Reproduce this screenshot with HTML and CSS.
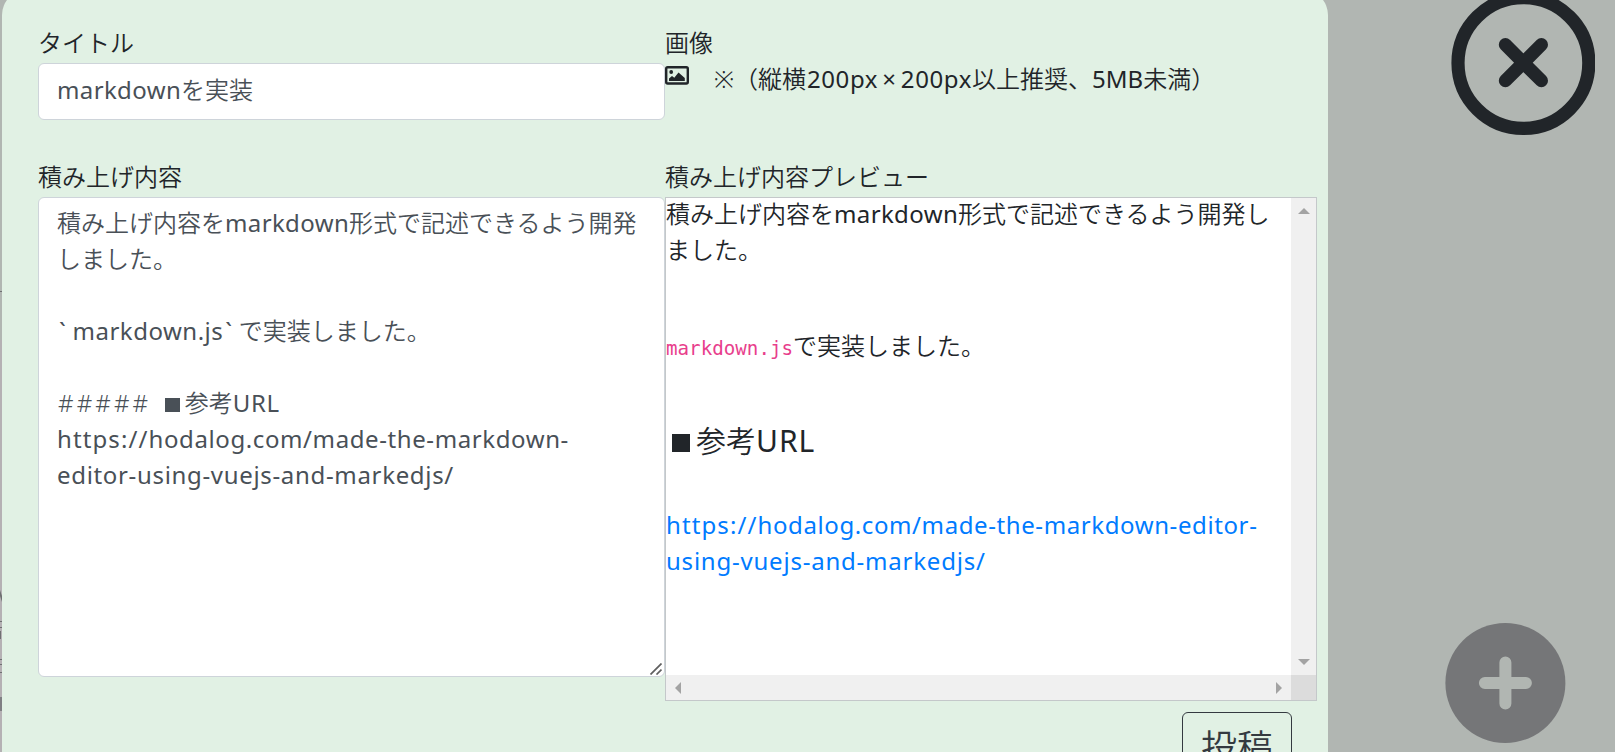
FILE: index.html
```html
<!DOCTYPE html>
<html lang="ja">
<head>
<meta charset="utf-8">
<title>投稿</title>
<link rel="stylesheet" href="styles.css">
</head>
<body>
<div class="page">
  <div class="backdrop-edge">
    <svg width="2" height="752"><path fill="#b5b1b4" d="M0 340h2v412H0z"/><path fill="#6f7072" d="M0 291h2v1H0zM0 590l2 6v6l-2-6zM0 621h2v1H0zM0 627h2v1H0zM0 631h1v8H0zM0 659h2v1H0zM0 664h2v1H0zM0 672h2v1H0z"/><path fill="#7f7f83" d="M0 697h2v14H0z"/></svg>
  </div>
  <main class="modal">
    <div class="grid">
      <section class="field title-field">
        <label class="label">タイトル</label>
        <div class="input"><span class="latin t1">markdown</span>を実装</div>
      </section>
      <section class="field">
        <label class="label">画像</label>
        <div class="upload">
          <svg class="image-icon" width="24" height="19" viewBox="0 0 24 19"><rect x="1.2" y="1.2" width="21.600" height="16.300" rx="1.5" fill="none" stroke="#212529" stroke-width="2.4"/><circle cx="6.200" cy="6" r="1.900" fill="#212529"/><path fill="#212529" d="M4 15v-2.500l3-2.500 2.300 1.800 4.200-5.300 6.300 5.500V15z"/></svg>
          <p class="note">※（縦横<span class="latin t2">200px</span><span class="latin times">×</span><span class="latin t2">200px</span>以上推奨、<span class="latin">5MB</span>未満）</p>
        </div>
      </section>
      <section class="field">
        <label class="label">積み上げ内容</label>
        <div class="textarea">
          <p>積み上げ内容を<span class="latin t1">markdown</span>形式で記述できるよう開発</p>
          <p>しました。</p>
          <p>&nbsp;</p>
          <p><span class="latin tick">`</span><span class="latin t4">markdown.js</span><span class="latin tick">`</span>で実装しました。</p>
          <p>&nbsp;</p>
          <p><span class="hash">##### </span><span class="square"></span>参考<span class="latin t5">URL</span></p>
          <p><span class="latin scheme">https://</span><span class="latin t6">hodalog.com/made-the-markdown-</span></p>
          <p><span class="latin t7">editor-using-vuejs-and-markedjs/</span></p>
          <svg class="grip" width="12" height="12" viewBox="0 0 12 12"><path d="M.5 11.500 11.500.5M6.500 11.500l5-5" stroke="#5f5f5f" stroke-width="1.700"/></svg>
        </div>
      </section>
      <section class="field">
        <label class="label">積み上げ内容プレビュー</label>
        <div class="preview">
          <article class="doc">
            <p>積み上げ内容を<span class="latin t1">markdown</span>形式で記述できるよう開発し<br>ました。</p>
            <p class="code-line"><code>markdown.js</code>で実装しました。</p>
            <h5><span class="square"></span>参考<span class="latin t8">URL</span></h5>
            <p><a><span class="latin scheme">https://</span><span class="latin t6">hodalog.com/made-the-markdown-editor-</span><br><span class="latin t9">using-vuejs-and-markedjs/</span></a></p>
          </article>
          <div class="vbar"><i class="up"></i><i class="down"></i></div>
          <div class="hbar"><i class="left"></i><i class="right"></i></div>
          <div class="corner"></div>
        </div>
      </section>
    </div>
    <button class="submit">投稿</button>
  </main>
  <svg class="close" width="144" height="144" viewBox="0 0 144 144"><g fill="none" stroke="#212529" stroke-width="13.200" stroke-linecap="round"><circle cx="72.400" cy="72" r="65.400"/><path d="M54.400 53.700l36 36M90.400 53.700l-36 36"/></g></svg>
  <svg class="add" width="121" height="120" viewBox="0 0 121 120"><circle cx="60.400" cy="60" r="60" fill="#757678"/><path d="M39.900 60h41M60.400 39.500v41" stroke="#b1b6b2" stroke-width="12" stroke-linecap="round"/></svg>
</div>
</body>
</html>
```
FILE: styles.css
```css
* { box-sizing: border-box; }
body { margin: 0; background: #fff; }
p, h5 { margin: 0; font-weight: 350; }
.page {
  position: relative;
  display: flex;
  width: 1615px;
  height: 752px;
  overflow: hidden;
  background: #b1b6b2;
  color: #212529;
  font: 350 24px/36px "Noto Sans", "Noto Sans CJK JP", sans-serif;
  white-space: nowrap;
}
.backdrop-edge { width: 2px; height: 752px; }
.backdrop-edge svg { display: block; }
.modal {
  width: 1326px;
  height: 800px;
  margin-top: -10px;
  padding: 35px 11px 0 36px;
  border-radius: 25px;
  background: #e1f1e4;
}
.grid {
  display: grid;
  grid-template-columns: 627px 652px;
  grid-template-rows: 134px auto;
}
.label { display: block; height: 38px; line-height: 35px; }
.input {
  height: 57px;
  padding: 8px 18px;
  border: 1px solid #ced4da;
  border-radius: 6px;
  background: #fff;
  color: #495057;
}
.upload { display: flex; gap: 25px; }
.image-icon { margin-top: 3px; }
.note { margin-top: -2px; }
.latin { font-weight: 400; }
.t1 { letter-spacing: .37px; }
.t2 { margin-left: 1px; letter-spacing: .6px; }
.times { margin: 0 4px; }
.t4 { letter-spacing: .5px; }
.tick { padding-left: 2px; letter-spacing: 6.8px; }
.hash { margin-left: 1px; letter-spacing: 3.15px; }
.t5 { letter-spacing: .7px; }
.scheme { letter-spacing: 1.1px; }
.t6 { letter-spacing: .6px; }
.t7 { letter-spacing: .67px; }
.t8 { letter-spacing: 1px; }
.t9 { letter-spacing: .78px; }
.textarea {
  position: relative;
  height: 480px;
  padding: 7px 18px;
  border: 1px solid #ced4da;
  border-radius: 6px;
  background: #fff;
  color: #495057;
}
.textarea p { height: 36px; }
.grip { position: absolute; right: 2px; bottom: 1px; }
.preview {
  display: grid;
  grid-template: 477px 25px / 625px 25px;
  border: 1px solid #c4c8ca;
  background: #fff;
}
.doc { margin-top: -2px; }
.code-line { height: 36px; margin-top: 60px; }
code {
  font: 400 19.2px/36px "DejaVu Sans Mono", monospace;
  color: #e83e8c;
}
h5 { height: 36px; margin: 59px 0 48px; font-size: 30px; line-height: 36px; }
a { color: #007bff; }
.vbar, .hbar { display: flex; justify-content: space-between; background: #f0f0f0; }
.vbar { flex-direction: column; align-items: center; padding: 10px 0; }
.hbar { align-items: center; padding: 0 9px; }
.corner { background: #dcdcdc; }
.vbar i, .hbar i { border: 6px solid transparent; }
.vbar .up { border-top: 0; border-bottom-color: #a3a3a3; }
.vbar .down { border-bottom: 0; border-top-color: #a3a3a3; }
.hbar .left { border-left: 0; border-right-color: #a3a3a3; }
.hbar .right { border-right: 0; border-left-color: #a3a3a3; }
.square {
  display: inline-block;
  width: .6em;
  height: .6em;
  margin: 0 .2em;
  background: currentColor;
}
.submit {
  display: block;
  width: 110px;
  height: 66px;
  margin: 11px 0 0 1144px;
  padding: 0;
  border: 1px solid #343a40;
  border-radius: 6px;
  background: transparent;
  color: #343a40;
  font: 350 36px/54px "Noto Sans CJK JP", sans-serif;
}
.close { position: absolute; left: 1451px; top: -9px; }
.add { position: absolute; left: 1445px; top: 623px; }
```
